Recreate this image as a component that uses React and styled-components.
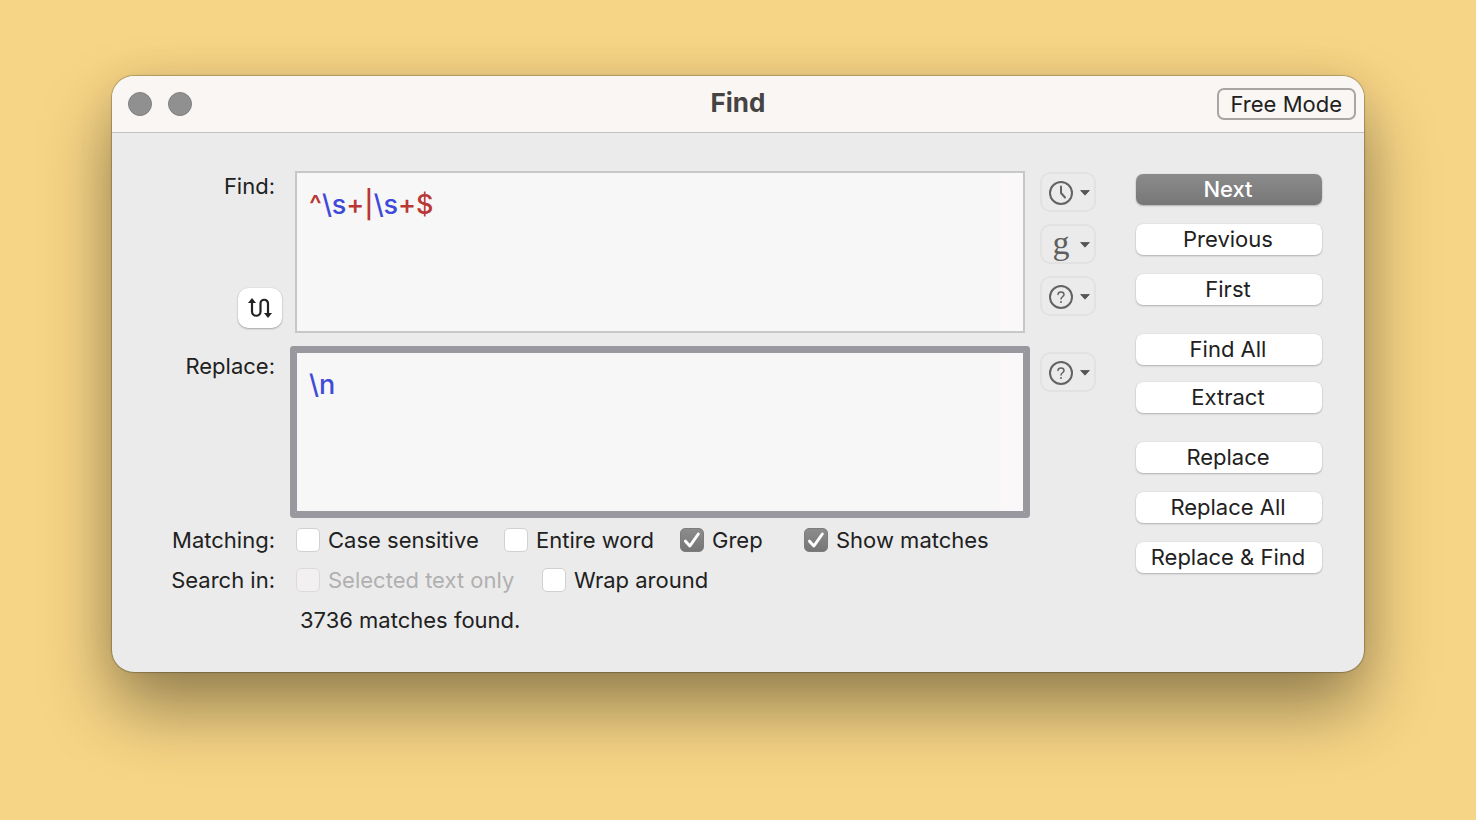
import React, { useState } from "react";
import styled, { createGlobalStyle, css } from "styled-components";

const GlobalStyle = createGlobalStyle`
  *, *::before, *::after { box-sizing: border-box; }
  body {
    margin: 0;
    background: #f7d586;
    color: #212121;
    font-family: Inter, "Liberation Sans", sans-serif;
    font-size: 22px;
    line-height: 32px;
  }
  button, input, textarea { font: inherit; color: inherit; margin: 0; }
`;

const Desktop = styled.main`
  min-height: 100vh;
  padding: 76px 112px;
`;

const Window = styled.section`
  background: #ebebeb;
  border-radius: 22px;
  box-shadow:
    0 0 1px 1px rgba(0, 0, 0, 0.24),
    0 0 40px rgba(0, 0, 0, 0.06),
    0 36px 70px rgba(0, 0, 0, 0.4);
`;

const TitleBar = styled.header`
  display: grid;
  grid-template-columns: 1fr auto 1fr;
  align-items: center;
  height: 57px;
  padding: 0 8px;
  background: #faf6f4;
  border-bottom: 1px solid #c2c0c0;
  border-radius: 22px 22px 0 0;
`;

const TrafficLights = styled.div`
  display: flex;
  gap: 16px;
  padding-left: 8px;
`;

const TrafficLight = styled.button`
  width: 24px;
  height: 24px;
  padding: 0;
  border: 1px solid #828080;
  border-radius: 50%;
  background: #919090;
`;

const Title = styled.h1`
  margin: 0;
  padding-bottom: 2px;
  font-size: 26px;
  line-height: 32px;
  font-weight: 700;
  color: #464443;
`;

const ModeButton = styled.button`
  justify-self: end;
  height: 32px;
  padding: 0 12px;
  border: 2px solid #a9a5a4;
  border-radius: 7px;
  background: transparent;
  line-height: 28px;
`;

const Body = styled.form`
  display: grid;
  grid-template-columns: 1fr 186px;
  column-gap: 40px;
  padding: 38px 42px 32px 0;
`;

const Fields = styled.div`
  display: flex;
  flex-direction: column;
`;

const FieldRow = styled.div`
  display: grid;
  grid-template-columns: 163px 1fr 56px;
  column-gap: 20px;
  margin-bottom: ${(p) => p.$space}px;
`;

const LabelCell = styled.div`
  display: flex;
  flex-direction: column;
  justify-content: space-between;
  align-items: flex-end;
  padding-bottom: 5px;
  line-height: 30px;
`;

const Label = styled.label`
  text-align: right;
`;

const SwapButton = styled.button`
  display: grid;
  place-items: center;
  width: 44px;
  height: 40px;
  margin-right: -7px;
  padding: 0;
  border: 0;
  border-radius: 10px;
  background: #fff;
  box-shadow: 0 1px 2px rgba(0, 0, 0, 0.28), 0 0 1px rgba(0, 0, 0, 0.2);
`;

const Editor = styled.div`
  display: grid;
  height: 162px;
  margin-right: -5px;
  border: 2px solid #c8c7c8;
  background: linear-gradient(to left, #faf8f9 23px, #f7f7f7 23px) padding-box;
  ${(p) =>
    p.$focused &&
    css`
      border-color: #99989e;
      border-radius: 1px;
      box-shadow: 0 0 0 5px #99989e;
    `}
`;

const editorText = css`
  grid-area: 1 / 1;
  margin: 0;
  padding: 15px 12px;
  font-family: inherit;
  font-size: 27px;
  font-weight: 500;
  line-height: 34px;
  white-space: pre-wrap;
`;

const Highlight = styled.pre`
  ${editorText}
`;

const EditorInput = styled.textarea`
  ${editorText}
  width: 100%;
  border: 0;
  outline: 0;
  resize: none;
  background: transparent;
  color: ${(p) => p.$color};
  caret-color: #212121;
`;

const Token = styled.span`
  color: ${(p) => (p.$kind === "escape" ? "#3f4bd8" : "#b93735")};
`;

const Menus = styled.div`
  display: flex;
  flex-direction: column;
  gap: 12px;
  padding-top: 1px;
`;

const MenuButton = styled.button`
  display: flex;
  align-items: center;
  justify-content: space-between;
  width: 56px;
  height: 40px;
  padding: 1px 4px 0 6px;
  border: 2px solid #e2e2e2;
  border-radius: 10px;
  background: #ebebeb;
  color: #5f5f5f;
`;

const GrepGlyph = styled.span`
  width: 26px;
  padding-bottom: 4px;
  font-family: "Liberation Serif", serif;
  font-size: 34px;
  line-height: 28px;
  text-align: center;
`;

const OptionRow = styled.fieldset`
  display: grid;
  grid-template-columns: 163px 1fr;
  column-gap: 20px;
  align-items: center;
  min-width: 0;
  margin: 0;
  padding: 4px 0;
  border: 0;
`;

const RowName = styled.span`
  text-align: right;
`;

const Options = styled.div`
  display: flex;
  padding-left: 1px;
`;

const Option = styled.label`
  display: flex;
  align-items: center;
  gap: 8px;
  flex: 0 0 ${(p) => p.$width}px;
  white-space: nowrap;
  color: ${(p) => (p.$disabled ? "#b1b0b0" : "inherit")};
`;

const Checkbox = styled.input`
  appearance: none;
  flex: none;
  width: 24px;
  height: 24px;
  border: 1px solid #d0d0d0;
  border-radius: 5px;
  background: #fff;
  &:checked {
    border-color: #7c7c7c;
    background: linear-gradient(#8c8c8c, #767676);
  }
  &:disabled {
    border-color: #dcdada;
    background: #f2f0f0;
  }
`;

const BoxWrap = styled.span`
  display: grid;
  > * { grid-area: 1 / 1; }
  > svg { pointer-events: none; }
`;

const Status = styled.output`
  padding: 4px 0 4px 188px;
`;

const Actions = styled.div`
  display: flex;
  flex-direction: column;
  gap: 29px;
  padding-top: 3px;
`;

const ActionGroup = styled.div`
  display: flex;
  flex-direction: column;
  gap: ${(p) => p.$gap}px;
`;

const ActionButton = styled.button`
  height: 31px;
  padding: 0 2px 0 0;
  border: 0;
  border-radius: 7px;
  background: ${(p) => (p.$primary ? "linear-gradient(#8b8b8b, #777)" : "#fff")};
  color: ${(p) => (p.$primary ? "#fff" : "inherit")};
  font-weight: ${(p) => (p.$primary ? 500 : 400)};
  line-height: 31px;
  white-space: nowrap;
  box-shadow: 0 1px 2px rgba(0, 0, 0, 0.24), 0 0 1px rgba(0, 0, 0, 0.16);
`;

const Caret = () => (
  <svg width="10" height="6" viewBox="0 0 10 6" aria-hidden="true">
    <path d="M0.6 0.5h8.8L5 5.2z" fill="#555" stroke="#555" strokeWidth="0.8" strokeLinejoin="round" />
  </svg>
);

const ClockIcon = () => (
  <svg width="26" height="26" viewBox="0 0 26 26" fill="none" stroke="#636363" strokeWidth="2" strokeLinecap="round" strokeLinejoin="round" aria-hidden="true">
    <circle cx="13" cy="13" r="11" />
    <path d="M13 6.5V13l4 4.5" />
  </svg>
);

const HelpIcon = () => (
  <svg width="26" height="26" viewBox="0 0 26 26" fill="none" stroke="#636363" strokeLinecap="round" aria-hidden="true">
    <circle cx="13" cy="13" r="11" strokeWidth="2" />
    <path d="M10 10.6C10 8.8 11.3 7.9 13 7.9s3 1 3 2.6c0 2.2-3 2.3-3 4.5" strokeWidth="1.5" />
    <circle cx="13" cy="18" r="1" fill="#636363" stroke="none" />
  </svg>
);

const SwapIcon = () => (
  <svg width="26" height="22" viewBox="0 0 26 22" fill="none" aria-hidden="true">
    <path d="M5 4v10.5a4.25 4.25 0 0 0 8.5 0V6.500a3.75 3.75 0 0 1 7.5 0V18" stroke="#222" strokeWidth="2.200" />
    <path d="M5 1l4 5H1zM21 21l4-5h-8z" fill="#222" />
  </svg>
);

const CheckMark = () => (
  <svg width="24" height="24" viewBox="0 0 24 24" fill="none" aria-hidden="true">
    <path d="M5.5 13.2l4.4 4.8L18.3 6" stroke="#fff" strokeWidth="3" strokeLinecap="round" strokeLinejoin="round" />
  </svg>
);

function tokenize(pattern) {
  return pattern.match(/\\.|[^\\]+|\\$/g) || [];
}

function CheckOption({ label, width, disabled, initial = false }) {
  const [checked, setChecked] = useState(initial);
  return (
    <Option $width={width} $disabled={disabled}>
      <BoxWrap>
        <Checkbox type="checkbox" checked={checked} disabled={disabled} onChange={(e) => setChecked(e.target.checked)} />
        {checked && <CheckMark />}
      </BoxWrap>
      {label}
    </Option>
  );
}

const actionGroups = [
  { gap: 19, items: ["Next", "Previous", "First"] },
  { gap: 17, items: ["Find All", "Extract"] },
  { gap: 19, items: ["Replace", "Replace All", "Replace & Find"] },
];

export default function App() {
  const [find, setFind] = useState("^\\s+|\\s+$");
  const [replace, setReplace] = useState("\\n");

  const swap = () => {
    setFind(replace);
    setReplace(find);
  };

  return (
    <>
      <GlobalStyle />
      <Desktop>
        <Window aria-labelledby="window-title">
          <TitleBar>
            <TrafficLights>
              <TrafficLight type="button" aria-label="Close" />
              <TrafficLight type="button" aria-label="Minimize" />
            </TrafficLights>
            <Title id="window-title">Find</Title>
            <ModeButton type="button">Free Mode</ModeButton>
          </TitleBar>
          <Body onSubmit={(e) => e.preventDefault()}>
            <Fields>
              <FieldRow $space={18}>
                <LabelCell>
                  <Label htmlFor="find">Find:</Label>
                  <SwapButton type="button" aria-label="Swap" onClick={swap}>
                    <SwapIcon />
                  </SwapButton>
                </LabelCell>
                <Editor>
                  <Highlight aria-hidden="true">
                    {tokenize(find).map((part, i) => (
                      <Token key={i} $kind={part[0] === "\\" ? "escape" : "operator"}>{part}</Token>
                    ))}
                  </Highlight>
                  <EditorInput id="find" $color="transparent" spellCheck={false} value={find} onChange={(e) => setFind(e.target.value)} />
                </Editor>
                <Menus>
                  <MenuButton type="button" aria-label="History"><ClockIcon /><Caret /></MenuButton>
                  <MenuButton type="button" aria-label="Saved patterns"><GrepGlyph>g</GrepGlyph><Caret /></MenuButton>
                  <MenuButton type="button" aria-label="Pattern help"><HelpIcon /><Caret /></MenuButton>
                </Menus>
              </FieldRow>
              <FieldRow $space={7}>
                <LabelCell>
                  <Label htmlFor="replace">Replace:</Label>
                </LabelCell>
                <Editor $focused>
                  <EditorInput id="replace" $color="#3f4bd8" spellCheck={false} value={replace} onChange={(e) => setReplace(e.target.value)} />
                </Editor>
                <Menus>
                  <MenuButton type="button" aria-label="Replacement help"><HelpIcon /><Caret /></MenuButton>
                </Menus>
              </FieldRow>
              <OptionRow aria-labelledby="matching">
                <RowName id="matching">Matching:</RowName>
                <Options>
                  <CheckOption label="Case sensitive" width={208} />
                  <CheckOption label="Entire word" width={176} />
                  <CheckOption label="Grep" width={124} initial />
                  <CheckOption label="Show matches" width={186} initial />
                </Options>
              </OptionRow>
              <OptionRow aria-labelledby="search-in">
                <RowName id="search-in">Search in:</RowName>
                <Options>
                  <CheckOption label="Selected text only" width={246} disabled />
                  <CheckOption label="Wrap around" width={186} />
                </Options>
              </OptionRow>
              <Status>3736 matches found.</Status>
            </Fields>
            <Actions>
              {actionGroups.map((group) => (
                <ActionGroup key={group.items[0]} $gap={group.gap}>
                  {group.items.map((name) => (
                    <ActionButton key={name} type="button" $primary={name === "Next"}>{name}</ActionButton>
                  ))}
                </ActionGroup>
              ))}
            </Actions>
          </Body>
        </Window>
      </Desktop>
    </>
  );
}
